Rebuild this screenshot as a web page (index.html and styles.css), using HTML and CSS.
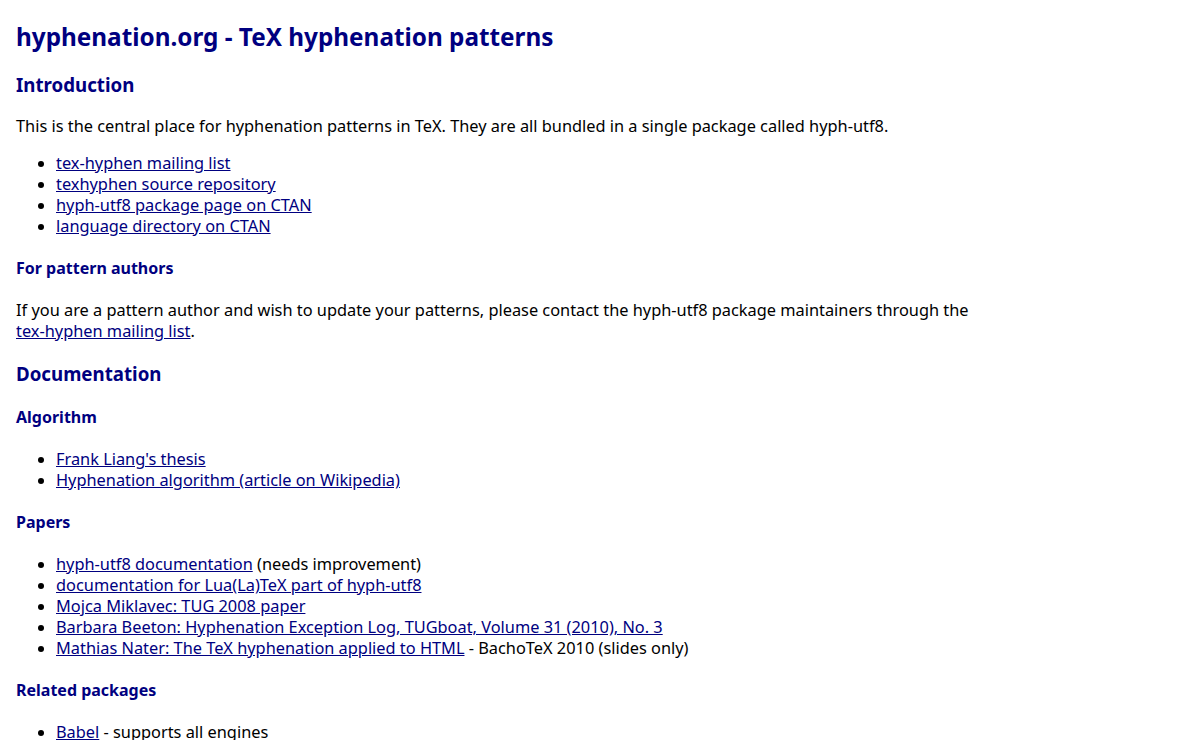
FILE: index.html
```html
<!DOCTYPE html>
<html lang="en">
<head>
    <meta charset="UTF-8">
    <meta name="viewport" content="width=device-width, initial-scale=1.0">
    <title>hyphenation.org - TeX hyphenation patterns</title>
    <link rel="stylesheet" href="styles.css">
</head>
<body>
    <div class="page">
        <h1>hyphenation.org - TeX hyphenation patterns</h1>

        <h2>Introduction</h2>
        <p>This is the central place for hyphenation patterns in TeX. They are all bundled in a single package called hyph-utf8.</p>
        <ul>
            <li><a href="#">tex-hyphen mailing list</a></li>
            <li><a href="#">texhyphen source repository</a></li>
            <li><a href="#">hyph-utf8 package page on CTAN</a></li>
            <li><a href="#">language directory on CTAN</a></li>
        </ul>

        <h3>For pattern authors</h3>
        <p>If you are a pattern author and wish to update your patterns, please contact the hyph-utf8 package maintainers through the <a href="#" class="nowrap">tex-hyphen mailing list</a>.</p>

        <h2>Documentation</h2>

        <h3>Algorithm</h3>
        <ul>
            <li><a href="#">Frank Liang's thesis</a></li>
            <li><a href="#">Hyphenation algorithm (article on Wikipedia)</a></li>
        </ul>

        <h3>Papers</h3>
        <ul>
            <li><a href="#">hyph-utf8 documentation</a> (needs improvement)</li>
            <li><a href="#">documentation for Lua(La)TeX part of hyph-utf8</a></li>
            <li><a href="#">Mojca Miklavec: TUG 2008 paper</a></li>
            <li><a href="#">Barbara Beeton: Hyphenation Exception Log, TUGboat, Volume 31 (2010), No. 3</a></li>
            <li><a href="#">Mathias Nater: The TeX hyphenation applied to HTML</a> - BachoTeX 2010 (slides only)</li>
        </ul>

        <h3>Related packages</h3>
        <ul>
            <li><a href="#">Babel</a> - supports all engines</li>
            <li><a href="#">Polyglossia</a> - for XeTeX and LuaTeX</li>
        </ul>
    </div>
</body>
</html>
```

FILE: styles.css
```css
body {
    margin: 0;
    padding: 0;
    background: #fff;
    color: #000;
    font-family: "Noto Sans", "Open Sans", sans-serif;
    font-size: 16.35px;
    line-height: 21px;
}
.page {
    max-width: 980px;
    padding: 0 16px;
}
h1, h2, h3 {
    color: #000080;
    font-weight: bold;
}
h1 {
    font-size: 24.3px;
    line-height: 33px;
    margin: 20px 0 19px;
}
h2 {
    font-size: 18.7px;
    line-height: 25px;
    margin: 19px 0;
}
h3 {
    font-size: 16px;
    line-height: 21px;
    margin: 21px 0;
}
p {
    margin: 16px 0;
}
ul {
    margin: 16px 0;
    padding-left: 40px;
}
a {
    color: #000080;
}
.nowrap {
    white-space: nowrap;
}
```
